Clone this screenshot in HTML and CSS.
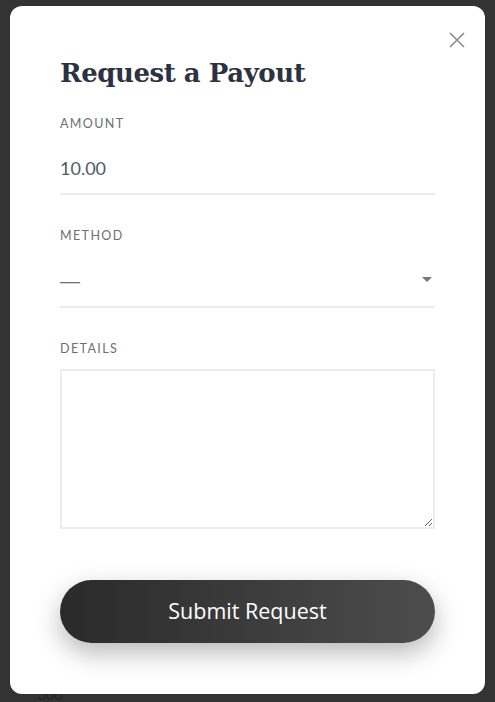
FILE: index.html
```html
<!DOCTYPE html>
<html>
<head>
    <meta charset="utf-8" />
    <title>Request a Payout</title>
    <link rel="stylesheet" href="styles.css">
</head>
<body>
    <!-- 背景里的图表残影 -->
    <div class="backdrop_num">300</div>

    <div class="modal">
      <button class="close_btn" type="button" aria-label="Close">
        <svg width="16" height="16" viewBox="0 0 16 16">
          <path d="M1 1 L15 15 M15 1 L1 15" stroke="#8a8b93" stroke-width="1.6" fill="none"/>
        </svg>
      </button>

      <h1 class="title">Request a Payout</h1>

      <div class="field">
        <label class="field_label">AMOUNT</label>
        <input class="field_input" type="text" value="10.00">
      </div>

      <div class="field">
        <label class="field_label">METHOD</label>
        <div class="field_select">
          <span class="dash">&mdash;</span>
          <i class="arrow"></i>
        </div>
      </div>

      <div class="field">
        <label class="field_label">DETAILS</label>
        <textarea class="field_area"></textarea>
      </div>

      <button class="submit_btn" type="button">Submit Request</button>
    </div>
</body>
</html>
```

FILE: styles.css
```css
* {
  margin: 0;
  padding: 0;
  box-sizing: border-box;
}
body {
  background-color: #333333;
  font-family: "Lato", "Liberation Sans", sans-serif;
  position: relative;
  min-height: 702px;
  padding: 6px 10px 0;
}
.backdrop_num {
  position: absolute;
  left: 38px;
  top: 688px;
  font-size: 14px;
  line-height: 14px;
  color: #222;
}
/* 弹窗 */
.modal {
  position: relative;
  z-index: 1;
  width: 475px;
  background-color: #fff;
  border-radius: 12px;
  padding: 51px 50px 51px;
}
.close_btn {
  position: absolute;
  top: 26px;
  right: 20px;
  width: 16px;
  height: 16px;
  border: none;
  background: none;
  cursor: pointer;
}
.close_btn svg {
  display: block;
}
.title {
  font-family: "DejaVu Serif", "Liberation Serif", serif;
  font-weight: bold;
  font-size: 26px;
  line-height: 32px;
  color: #2c3241;
  letter-spacing: -0.45px;
  margin-bottom: 27px;
}
/* 表单项 */
.field {
  margin-bottom: 33px;
}
.field_label {
  display: block;
  font-size: 12.5px;
  line-height: 16px;
  letter-spacing: 1.4px;
  color: #6e6e74;
  margin-bottom: 12px;
}
.field_input {
  display: block;
  width: 100%;
  height: 51px;
  border: none;
  border-bottom: 2px solid #ebebf0;
  outline: none;
  font-family: inherit;
  font-size: 18px;
  color: #555a66;
  padding-bottom: 2px;
}
.field_select {
  display: flex;
  align-items: center;
  justify-content: space-between;
  height: 52px;
  border-bottom: 2px solid #ebebf0;
  font-size: 18px;
  color: #555a66;
}
.field_select .dash {
  font-family: "Liberation Sans", sans-serif;
  font-size: 20px;
  color: #6a6e78;
}
.field_select .arrow {
  width: 0;
  height: 0;
  border-left: 5px solid transparent;
  border-right: 5px solid transparent;
  border-top: 5px solid #777;
  margin-right: 3px;
  margin-bottom: 4px;
}
.field_area {
  display: block;
  width: 100%;
  height: 160px;
  border: 2px solid #ebebf0;
  outline: none;
  margin-top: 1px;
}
/* 提交按钮 */
.submit_btn {
  display: block;
  width: 100%;
  height: 63px;
  margin-top: 51px;
  border: none;
  border-radius: 32px;
  background: linear-gradient(to right, #2a2a2a, #4d4d4d);
  box-shadow: 0 10px 26px rgba(0, 0, 0, 0.28);
  color: #fff;
  font-family: "Open Sans", "Liberation Sans", sans-serif;
  font-size: 21.5px;
  padding-bottom: 2px;
  cursor: pointer;
}
```
